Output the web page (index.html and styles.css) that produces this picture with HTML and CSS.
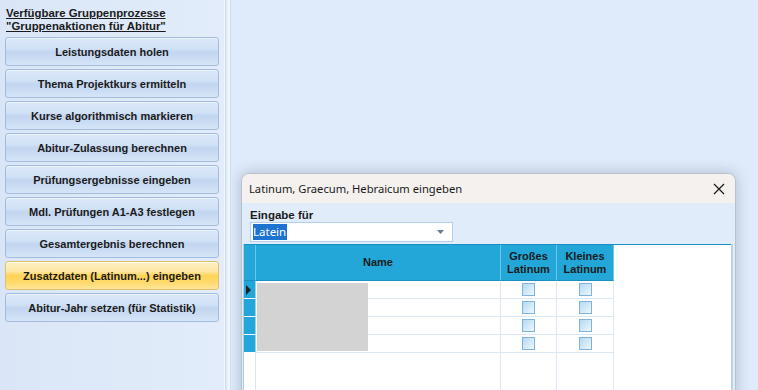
FILE: index.html
```html
<!DOCTYPE html>
<html lang="de">
<head>
    <meta charset="UTF-8">
    <meta name="viewport" content="width=device-width, initial-scale=1.0">
    <title>Gruppenprozesse</title>
    <link rel="stylesheet" href="styles.css">
</head>
<body>
    <div class="app">
        <div class="sidebar">
            <div class="group-title">Verfügbare Gruppenprozesse<br>"Gruppenaktionen für Abitur"</div>
            <button class="action">Leistungsdaten holen</button>
            <button class="action">Thema Projektkurs ermitteln</button>
            <button class="action">Kurse algorithmisch markieren</button>
            <button class="action">Abitur-Zulassung berechnen</button>
            <button class="action">Prüfungsergebnisse eingeben</button>
            <button class="action">Mdl. Prüfungen A1-A3 festlegen</button>
            <button class="action">Gesamtergebnis berechnen</button>
            <button class="action active">Zusatzdaten (Latinum...) eingeben</button>
            <button class="action">Abitur-Jahr setzen (für Statistik)</button>
        </div>

        <div class="splitter"></div>

        <div class="workspace">
            <div class="dialog">
                <div class="dialog-title">
                    <span>Latinum, Graecum, Hebraicum eingeben</span>
                    <svg class="close" width="12" height="12" viewBox="0 0 12 12">
                        <path d="M1 1 L11 11 M11 1 L1 11" stroke="#1a1a1a" stroke-width="1.2" fill="none"/>
                    </svg>
                </div>
                <div class="dialog-body">
                    <div class="field-label">Eingabe für</div>
                    <div class="combo">
                        <span class="combo-value">Latein</span>
                        <svg class="combo-arrow" width="7" height="4" viewBox="0 0 7 4">
                            <path d="M0 0 H7 L3.5 4 Z" fill="#6b7a8c"/>
                        </svg>
                    </div>

                    <div class="grid">
                        <div class="grid-row grid-head">
                            <div class="cell c-sel"></div>
                            <div class="cell c-name">Name</div>
                            <div class="cell c-chk">Großes<br>Latinum</div>
                            <div class="cell c-chk c-chk2">Kleines<br>Latinum</div>
                            <div class="cell c-fill"></div>
                        </div>
                        <div class="grid-rows">
                            <div class="grid-row">
                                <div class="cell c-sel current"><span class="arrow"></span></div>
                                <div class="cell c-name"></div>
                                <div class="cell c-chk"><span class="check"></span></div>
                                <div class="cell c-chk c-chk2"><span class="check"></span></div>
                                <div class="cell c-fill"></div>
                            </div>
                            <div class="grid-row">
                                <div class="cell c-sel"></div>
                                <div class="cell c-name"></div>
                                <div class="cell c-chk"><span class="check"></span></div>
                                <div class="cell c-chk c-chk2"><span class="check"></span></div>
                                <div class="cell c-fill"></div>
                            </div>
                            <div class="grid-row">
                                <div class="cell c-sel"></div>
                                <div class="cell c-name"></div>
                                <div class="cell c-chk"><span class="check"></span></div>
                                <div class="cell c-chk c-chk2"><span class="check"></span></div>
                                <div class="cell c-fill"></div>
                            </div>
                            <div class="grid-row">
                                <div class="cell c-sel"></div>
                                <div class="cell c-name"></div>
                                <div class="cell c-chk"><span class="check"></span></div>
                                <div class="cell c-chk c-chk2"><span class="check"></span></div>
                                <div class="cell c-fill"></div>
                            </div>
                            <div class="grid-row grid-empty">
                                <div class="cell c-sel"></div>
                                <div class="cell c-name"></div>
                                <div class="cell c-chk"></div>
                                <div class="cell c-chk c-chk2"></div>
                                <div class="cell c-fill"></div>
                            </div>
                            <div class="redacted"></div>
                        </div>
                    </div>
                </div>
            </div>
        </div>
    </div>
</body>
</html>
```

FILE: styles.css
```css
* {
    box-sizing: border-box;
}

body {
    margin: 0;
    width: 758px;
    height: 390px;
    overflow: hidden;
    font-family: "Liberation Sans", Arial, sans-serif;
    color: #1b1b1b;
    background-color: #dfeafa;
}

.app {
    display: flex;
    height: 390px;
    overflow: hidden;
}

.sidebar {
    width: 224px;
    padding: 7px 0 0 5px;
    background: linear-gradient(90deg, #dae6f7, #e2ecfa);
}

.group-title {
    margin: 0 0 5px 1px;
    font-size: 11.4px;
    font-weight: bold;
    line-height: 12.5px;
    text-decoration: underline;
}

.action {
    display: block;
    width: 214px;
    height: 29px;
    margin-bottom: 3px;
    padding: 0;
    border: 1px solid #a3bcde;
    border-radius: 3px;
    background: linear-gradient(#dbe8f9 0%, #d2e2f6 38%, #c3d6f0 52%, #cadcf3 75%, #d6e5f8 100%);
    box-shadow: inset 0 1px 0 #eaf2fd;
    font-family: "Liberation Sans", Arial, sans-serif;
    font-size: 11px;
    font-weight: bold;
    color: #1b1b1b;
    text-align: center;
}

.action.active {
    border-color: #e0bf6e;
    background: linear-gradient(#fdf2c6 0%, #fde6a2 35%, #ffd457 50%, #ffd96a 75%, #ffe69a 100%);
    box-shadow: inset 0 1px 0 #fffbe8;
}

.splitter {
    width: 8px;
    background: linear-gradient(90deg, #f4f8fe 0 1px, #c8daf1 1px 2px, #e3edfa 2px 4px, #f4f8fe 4px 6px, #c8daf1 6px 7px, #dfeafa 7px);
}

.workspace {
    position: relative;
    flex: 1;
    overflow: hidden;
}

/* dialog window floats on the workspace */
.dialog {
    position: absolute;
    left: 9px;
    top: 173px;
    width: 495px;
    height: 240px;
    display: flex;
    flex-direction: column;
    border: 1px solid #b9c1cc;
    border-radius: 8px 8px 0 0;
    background-color: #e0ecfa;
    box-shadow: 0 0 14px rgba(60, 80, 110, 0.3);
    overflow: hidden;
}

.dialog-title {
    display: flex;
    align-items: center;
    justify-content: space-between;
    height: 29px;
    padding: 0 10px 0 7px;
    background-color: #f4f1ef;
    font-family: "Noto Sans", "Open Sans", sans-serif;
    font-size: 11.2px;
    color: #1a1a1a;
}

.close {
    margin-top: 1px;
}

.dialog-body {
    flex: 1;
    display: flex;
    flex-direction: column;
    padding: 6px 1px 0 1px;
}

.field-label {
    margin-left: 7px;
    font-size: 11.5px;
    font-weight: bold;
    line-height: 13px;
}

.combo {
    display: flex;
    align-items: center;
    justify-content: space-between;
    width: 203px;
    height: 20px;
    margin: 0 0 2px 7px;
    padding: 0 8px 0 2px;
    border: 1px solid #b5d0ee;
    background-color: #fff;
}

.combo-value {
    padding: 1px 1px 1px 0;
    background-color: #1d73d0;
    color: #fff;
    font-family: "Noto Sans", "Open Sans", sans-serif;
    font-size: 11.5px;
    line-height: 14px;
}

.grid {
    flex: 1;
    display: flex;
    flex-direction: column;
    margin-right: 1px;
    border-left: 1px solid #9fd2ef;
    border-right: 2px solid #b8d5ee;
    background-color: #fff;
}

.grid-row {
    display: flex;
    height: 18px;
}

.grid-head {
    height: 37px;
    border-top: 1px solid #1a8fc3;
    background-color: #22a7d8;
    font-size: 11px;
    font-weight: bold;
    line-height: 13px;
    text-align: center;
}

.grid-rows {
    position: relative;
    flex: 1;
    display: flex;
    flex-direction: column;
}

.cell {
    display: flex;
    align-items: center;
    justify-content: center;
    border-right: 1px solid #dde8f4;
    border-bottom: 1px solid #dde8f4;
}

.grid-head .cell {
    border-right: 1px solid #70c6ea;
    border-bottom: 1px solid #1a8fc3;
}

.grid-head .c-fill {
    background-color: #fff;
    border: none;
}

.c-sel {
    width: 12px;
    flex-shrink: 0;
}

.grid-rows .c-sel {
    background-color: #22a7d8;
    border-right: 1px solid #8fd6f1;
    border-bottom: 1px solid #fff;
}

.grid-rows .grid-empty .c-sel {
    background-color: #fff;
    border-right: 1px solid #dde8f4;
}

.c-name {
    width: 245px;
}

.c-chk {
    width: 56px;
}

.c-chk2 {
    width: 57px;
}

.c-fill {
    flex: 1;
    border-right: none;
    border-bottom: none;
}

.grid-empty {
    flex: 1;
    height: auto;
}

.grid-empty .cell {
    border-bottom: none;
}

.arrow {
    width: 0;
    height: 0;
    border-top: 5px solid transparent;
    border-bottom: 5px solid transparent;
    border-left: 5px solid #1f1f2a;
    margin-left: -2px;
}

.check {
    width: 13px;
    height: 13px;
    border: 1px solid #80b3dc;
    background: linear-gradient(135deg, #b3daf2, #eef7fd);
}

/* grey block hiding the student names */
.redacted {
    position: absolute;
    left: 13px;
    top: 2px;
    width: 111px;
    height: 68px;
    background-color: #d3d3d3;
}
```
